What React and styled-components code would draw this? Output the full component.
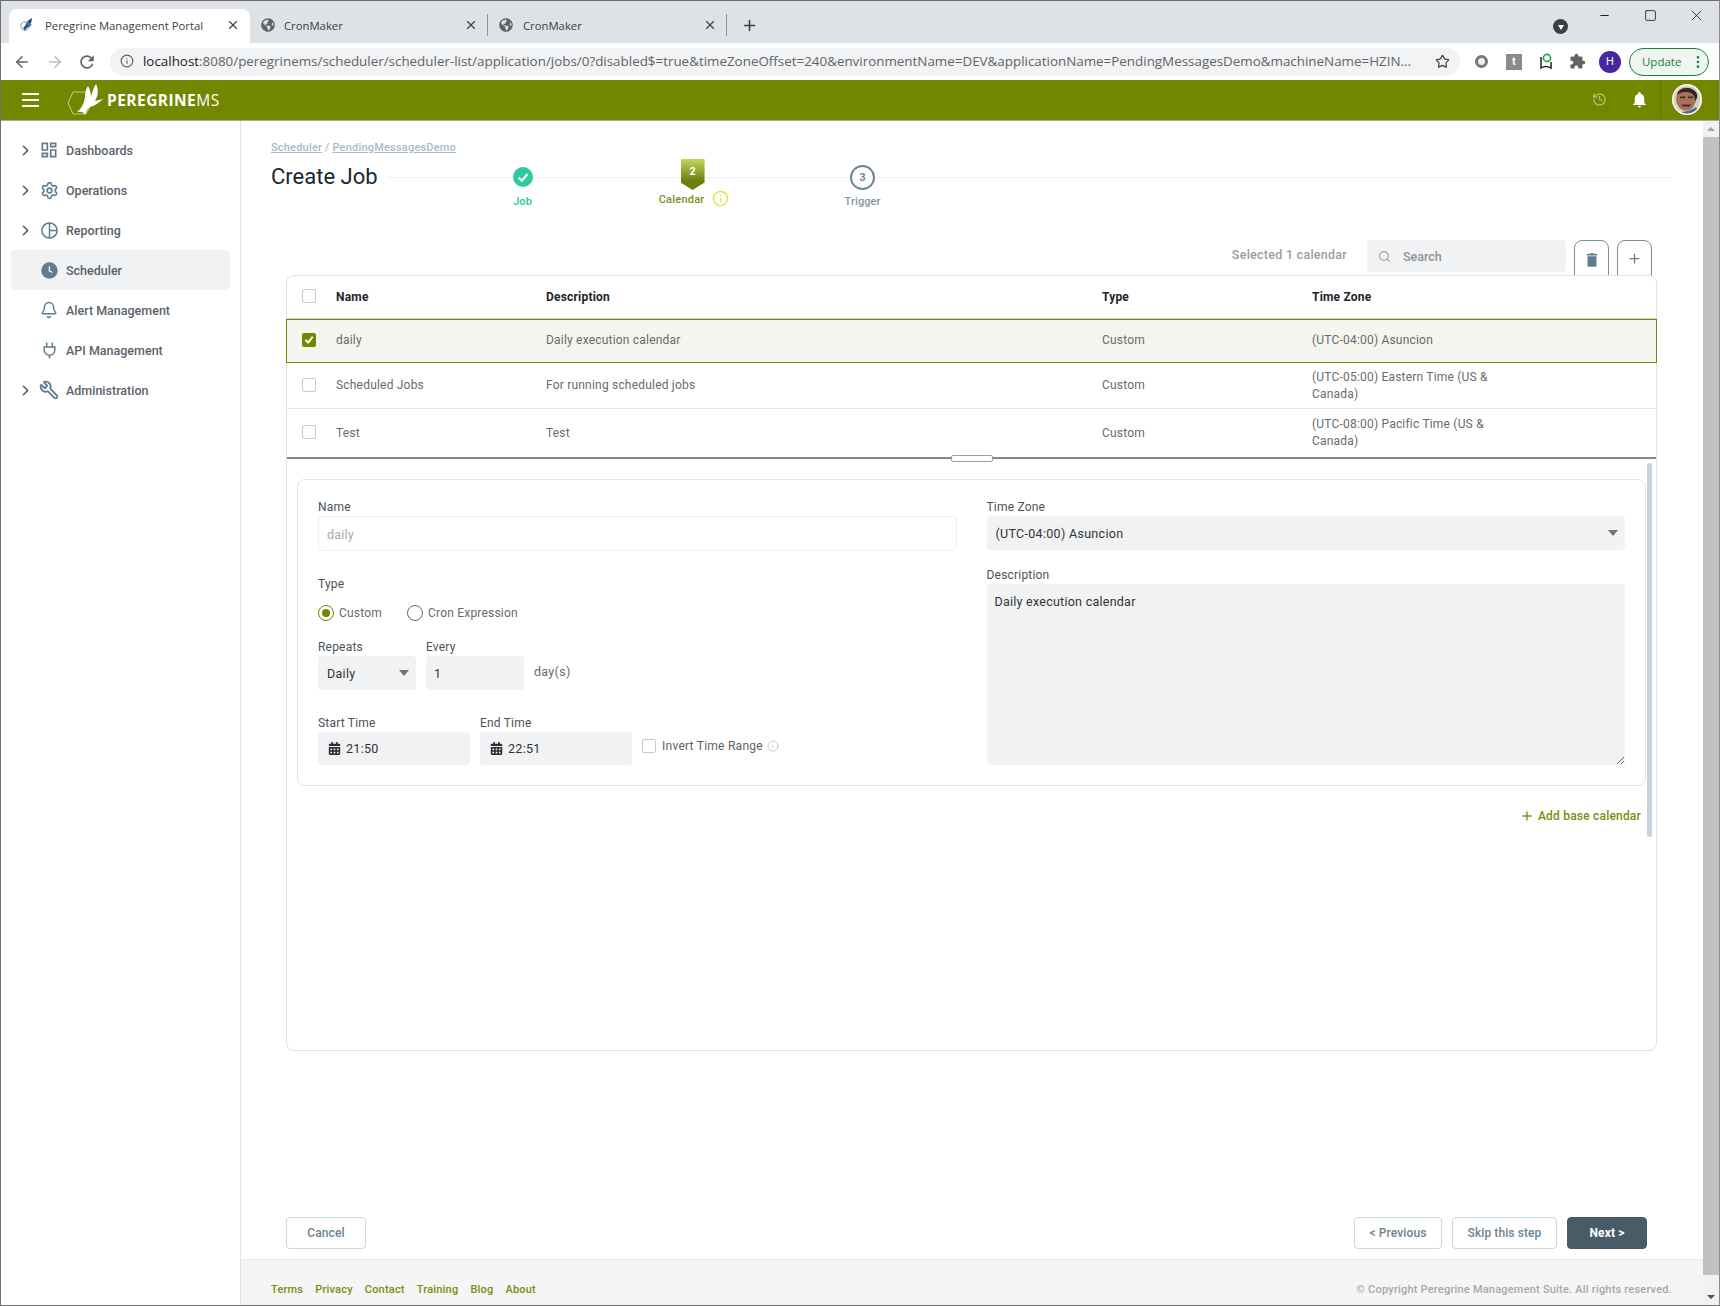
import React from "react";
import styled, { createGlobalStyle } from "styled-components";
import { ArrowLeft, ArrowRight, Info, Star, X, Plus, Minus, Square, ChevronRight, Settings, Bell, Wrench, History, Search, MoreVertical } from "lucide-react";
import { MdOutlineDashboard, MdExtension, MdNotifications, MdDelete, MdRefresh } from "react-icons/md";
import { FaCalendarAlt, FaGlobeAmericas } from "react-icons/fa";

const OLIVE = "#728600";

const GlobalStyle = createGlobalStyle`
  * { box-sizing: border-box; }
  html, body { margin: 0; height: 100%; overflow: hidden; background: #fff; }
  body { font-family: Roboto, "Liberation Sans", sans-serif; color: #212529; }
  #root { height: 100%; }
`;

const Window = styled.div`
  display: flex;
  flex-direction: column;
  width: 1720px;
  height: 1306px;
  border: 1px solid #6f6f6f;
  border-right-color: #8a8a8a;
`;

/* browser chrome */
const TabStrip = styled.div`
  display: flex;
  align-items: flex-end;
  height: 42px;
  padding-left: 8px;
  background: #dee1e6;
  flex-shrink: 0;
`;
const Tab = styled.div`
  display: flex;
  align-items: center;
  width: ${(p) => p.$width}px;
  height: 34px;
  padding: 0 10px 2px 9px;
  border-radius: 8px 8px 0 0;
  background: ${(p) => (p.$active ? "#fff" : "transparent")};
  font-family: "Open Sans", sans-serif;
  font-size: 11.3px;
  color: #3c4043;
  svg { flex-shrink: 0; }
  position: relative;
  &::after {
    content: "";
    display: ${(p) => (p.$active ? "none" : "block")};
    position: absolute;
    right: 0;
    top: 5px;
    width: 1px;
    height: 22px;
    background: #8f9297;
  }
`;
const TabIconSlot = styled.div`
  display: flex;
  justify-content: center;
  width: 18px;
  margin-right: ${(p) => p.$gap ?? 9}px;
  color: #5f6368;
`;
const TabTitle = styled.span`
  flex: 1;
  white-space: nowrap;
`;
const NewTab = styled.div`
  display: flex;
  align-items: center;
  height: 34px;
  padding-bottom: 2px;
  margin-left: 14px;
  color: #3c4043;
`;
const ProfileDot = styled.div`
  display: flex;
  align-items: center;
  justify-content: center;
  align-self: flex-start;
  width: 15px;
  height: 15px;
  margin: 18px 13px 0 auto;
  border-radius: 50%;
  background: #3c4043;
  &::after {
    content: "";
    border-left: 3.5px solid transparent;
    border-right: 3.5px solid transparent;
    border-top: 5px solid #fff;
    margin-top: 1px;
  }
`;
const WindowControls = styled.div`
  display: flex;
  align-self: flex-start;
  color: #222;
`;
const WindowButton = styled.div`
  display: flex;
  align-items: center;
  justify-content: center;
  width: 46px;
  height: 28px;
`;
const AddressBar = styled.div`
  display: flex;
  align-items: center;
  height: 37px;
  padding-left: 5px;
  background: #fff;
  flex-shrink: 0;
`;
const NavButton = styled.div`
  display: flex;
  align-items: center;
  justify-content: center;
  width: 32.6px;
  color: ${(p) => (p.$dim ? "#b9bcc0" : "#5f6368")};
`;
const Omnibox = styled.div`
  display: flex;
  align-items: center;
  width: 1350px;
  height: 28px;
  margin-left: 6.2px;
  padding: 0 10px 1px;
  border-radius: 14px;
  background: #f1f3f4;
  font-family: "Open Sans", sans-serif;
  font-size: 13.4px;
  color: #5f6368;
  white-space: nowrap;
`;
const UrlText = styled.div`
  flex: 1;
  margin-left: 9px;
  overflow: hidden;
  b { font-weight: 400; color: #202124; }
`;
const ExtSlot = styled.div`
  display: flex;
  align-items: center;
  justify-content: center;
  width: 32px;
  margin-left: ${(p) => (p.$first ? 6 : 0)}px;
  color: #5f6368;
`;
const ExtTile = styled.div`
  display: flex;
  align-items: center;
  justify-content: center;
  width: 16px;
  height: 16px;
  background: #8a8a8a;
  color: #fff;
  font-size: 11px;
  font-weight: 700;
`;
const ExtRing = styled.div`
  width: 13px;
  height: 13px;
  border-radius: 50%;
  border: 3px solid #777;
  background: #eee;
`;
const AccountDot = styled.div`
  display: flex;
  align-items: center;
  justify-content: center;
  width: 22px;
  height: 22px;
  border-radius: 50%;
  background: #4527a0;
  color: #fff;
  font-size: 11px;
`;
const UpdatePill = styled.div`
  display: flex;
  align-items: center;
  justify-content: space-between;
  width: 80px;
  height: 28px;
  margin-left: 3px;
  padding: 0 2px 0 12px;
  border: 1px solid #188038;
  border-radius: 14px;
  background: #eef6ef;
  color: #188038;
  font-family: "Open Sans", sans-serif;
  font-size: 11.5px;
`;

/* app header */
const AppHeader = styled.header`
  display: flex;
  align-items: center;
  height: 41px;
  padding: 0 0 1px 21px;
  background: ${OLIVE};
  border-bottom: 1px solid #a9a9a9;
  color: #fff;
  flex-shrink: 0;
`;
const Hamburger = styled.div`
  display: flex;
  flex-direction: column;
  gap: 4px;
  width: 17px;
  margin-right: 27px;
  span { display: block; height: 2px; background: #fff; }
`;
const Wordmark = styled.div`
  margin-left: 1px;
  font-family: "Open Sans", sans-serif;
  font-size: 15.5px;
  font-weight: 700;
  letter-spacing: 0.45px;
  span { font-weight: 400; }
`;
const HeaderTools = styled.div`
  display: flex;
  align-items: center;
  height: 100%;
  margin-left: auto;
`;
const HeaderIcon = styled.div`
  display: flex;
  justify-content: center;
  width: 40px;
  color: ${(p) => (p.$dim ? "#b4c270" : "#fff")};
`;
const AvatarCell = styled.div`
  display: flex;
  align-items: center;
  height: 100%;
  margin-left: 1px;
  padding: 0 17px 0 11px;
  border-left: 1px solid #62740a;
`;

/* body */
const Body = styled.div`
  display: flex;
  flex: 1;
  min-height: 0;
`;
const Sidebar = styled.nav`
  width: 240px;
  padding: 9px 10px 0;
  border-right: 1px solid #dfe1e3;
  flex-shrink: 0;
`;
const NavRow = styled.div`
  display: flex;
  align-items: center;
  height: 40px;
  border-radius: 4px;
  background: ${(p) => (p.$active ? "#f1f2f4" : "transparent")};
  font-size: 12.5px;
  font-weight: 500;
  color: #59636b;
`;
const Caret = styled.div`
  display: flex;
  justify-content: center;
  width: 28px;
  color: #555;
`;
const NavIcon = styled.div`
  display: flex;
  justify-content: center;
  width: 20px;
  margin-right: 7px;
  color: #5f7d8e;
`;
const Main = styled.main`
  display: flex;
  flex-direction: column;
  flex: 1;
  min-width: 0;
`;
const Breadcrumb = styled.div`
  padding: 20px 0 0 30px;
  font-size: 11px;
  font-weight: 500;
  line-height: 14px;
  letter-spacing: 0.2px;
  color: #a9bac5;
  a { color: inherit; text-decoration: underline; }
`;
const TitleRow = styled.div`
  display: flex;
  height: 51px;
  margin-top: 5px;
  padding: 0 31px 0 30px;
  flex-shrink: 0;
`;
const PageTitle = styled.h1`
  margin: 3px 10px 0 0;
  font-size: 22px;
  font-weight: 400;
  line-height: 28px;
  color: #212529;
  white-space: nowrap;
`;
const Steps = styled.div`
  position: relative;
  display: flex;
  flex: 1;
  gap: 70px;
  margin-top: -1px;
  padding-left: 85px;
  &::before {
    content: "";
    position: absolute;
    left: 0;
    right: 0;
    top: 18px;
    height: 1px;
    background: #f0f1f1;
  }
`;
const Step = styled.div`
  position: relative;
  display: flex;
  flex-direction: column;
  align-items: center;
  width: 100px;
`;
const StepSlot = styled.div`
  display: flex;
  align-items: center;
  justify-content: center;
  height: 36px;
`;
const StepBadge = styled.div`
  width: 24px;
  height: 31px;
  padding-top: 6px;
  background: linear-gradient(#c3d65f, #6c8012 70%);
  clip-path: polygon(0 0, 100% 0, 100% 76%, 50% 100%, 0 76%);
  color: #fff;
  font-size: 10.5px;
  font-weight: 700;
  line-height: 14px;
  text-align: center;
`;
const StepRing = styled.div`
  display: flex;
  align-items: center;
  justify-content: center;
  width: 25px;
  height: 25px;
  border: 2px solid #6b8494;
  border-radius: 50%;
  background: #fff;
  color: #6b8494;
  font-size: 10.5px;
  font-weight: 700;
`;
const StepLabel = styled.div`
  display: flex;
  align-items: center;
  gap: 8px;
  margin-top: ${(p) => p.$offset || 0}px;
  padding-left: ${(p) => p.$shift || 0}px;
  font-size: 11px;
  font-weight: 500;
  line-height: 14px;
  letter-spacing: ${(p) => (p.$shift ? 0.22 : 0.1)}px;
  color: ${(p) => p.$color};
  svg { margin-top: -2px; }
`;
const Content = styled.div`
  display: flex;
  flex-direction: column;
  flex: 1;
  min-height: 0;
  margin-top: 29px;
  padding: 0 46px 10px 45px;
`;
const Toolbar = styled.div`
  display: flex;
  justify-content: flex-end;
  gap: 8px;
  height: 35px;
  padding-right: 5px;
  flex-shrink: 0;
`;
const SelectedCount = styled.div`
  margin: 7px 12px 0 0;
  font-size: 12.5px;
  font-weight: 500;
  line-height: 16px;
  letter-spacing: 0.26px;
  color: #9a9ea2;
`;
const SearchBox = styled.div`
  display: flex;
  align-items: center;
  gap: 12px;
  width: 199px;
  height: 32px;
  padding-left: 11px;
  border-radius: 4px;
  background: #f1f2f4;
  font-size: 12.5px;
  font-weight: 500;
  color: #8d9499;
`;
const ToolButton = styled.div`
  display: flex;
  align-items: flex-start;
  justify-content: center;
  width: 35px;
  height: 42px;
  padding-top: 10px;
  border: 1px solid #838d93;
  border-radius: 8px 8px 0 0;
  background: #fff;
  color: #5f7d8e;
`;
const TableCard = styled.section`
  position: relative;
  z-index: 1;
  display: flex;
  flex-direction: column;
  height: 776px;
  border: 1px solid #e0e2e4;
  border-radius: 8px;
  background: #fff;
`;
const Row = styled.div`
  display: grid;
  grid-template-columns: 34px 210px 556px 210px 200px;
  align-items: center;
  height: ${(p) => p.$height}px;
  padding-left: 15px;
  padding-bottom: ${(p) => (p.$selected ? 2 : 0)}px;
  margin: 0 ${(p) => (p.$selected ? -1 : 0)}px;
  background: ${(p) => (p.$selected ? "#f4f5ef" : "transparent")};
  border: ${(p) => (p.$selected ? `1px solid ${OLIVE}` : "none")};
  border-bottom: ${(p) => (p.$selected ? `1px solid ${OLIVE}` : p.$head ? "1px solid #cfd2d4" : p.$last ? "none" : "1px solid #e3e5e6")};
  font-size: 12px;
  font-weight: ${(p) => (p.$head ? 700 : 400)};
  line-height: 17px;
  letter-spacing: 0.2px;
  color: ${(p) => (p.$head ? "#212529" : "#666b6f")};
`;
const Checkbox = styled.div`
  display: flex;
  align-items: center;
  justify-content: center;
  width: 14px;
  height: 14px;
  margin-bottom: ${(p) => (p.$raise ? 2 : 0)}px;
  border: 1px solid ${(p) => (p.$checked ? OLIVE : "#c6cacd")};
  border-radius: 2px;
  background: ${(p) => (p.$checked ? OLIVE : "#fff")};
  color: #fff;
  flex-shrink: 0;
`;
const Splitter = styled.div`
  position: relative;
  height: 2px;
  background: #85898c;
  flex-shrink: 0;
  &::after {
    content: "";
    position: absolute;
    left: 664px;
    top: -2px;
    width: 40px;
    height: 5px;
    border: 1px solid #9a9ea1;
    border-radius: 2px;
    background: #fff;
  }
`;
const Detail = styled.div`
  position: relative;
  flex: 1;
  padding: 20px 10px 0;
  &::after {
    content: "";
    position: absolute;
    right: 4px;
    top: 4px;
    width: 5px;
    height: 374px;
    border-radius: 3px;
    background: #c5d3dc;
  }
`;
const FormCard = styled.div`
  display: grid;
  grid-template-columns: 1fr 1fr;
  gap: 30px;
  height: 307px;
  padding: 20px 20px 19px;
  border: 1px solid #e3e5e7;
  border-radius: 8px;
`;
const Column = styled.div`
  display: flex;
  flex-direction: column;
  min-width: 0;
`;
const Label = styled.label`
  display: block;
  margin-top: ${(p) => p.$top || 0}px;
  margin-bottom: ${(p) => p.$bottom ?? 2}px;
  font-size: 12px;
  font-weight: 400;
  line-height: 14px;
  letter-spacing: 0.2px;
  color: #4c5257;
`;
const TextInput = styled.input`
  display: block;
  width: ${(p) => (p.$width ? `${p.$width}px` : "100%")};
  height: ${(p) => p.$height || 34}px;
  padding: ${(p) => (p.disabled ? "1px" : "0")} 8px 0;
  border: ${(p) => (p.disabled ? "1px solid #eceeef" : "none")};
  border-radius: 4px;
  background: ${(p) => (p.disabled ? "#fff" : "#f1f2f4")};
  font-family: inherit;
  font-size: 12.5px;
  letter-spacing: 0.2px;
  color: ${(p) => (p.disabled ? "#a8abad" : "#333")};
  outline: none;
`;
const RadioRow = styled.div`
  display: flex;
  gap: 25px;
  margin-top: 14px;
  height: 16px;
`;
const RadioLabel = styled.div`
  display: flex;
  align-items: center;
  gap: 5px;
  font-size: 12px;
  letter-spacing: 0.2px;
  color: #666b6f;
`;
const RadioDot = styled.div`
  display: flex;
  align-items: center;
  justify-content: center;
  width: 16px;
  height: 16px;
  border: 1px solid ${(p) => (p.$on ? OLIVE : "#666")};
  border-radius: 50%;
  &::after {
    content: "";
    display: ${(p) => (p.$on ? "block" : "none")};
    width: 8px;
    height: 8px;
    border-radius: 50%;
    background: ${OLIVE};
  }
`;
const FieldRow = styled.div`
  display: flex;
  align-items: flex-end;
  gap: 10px;
  margin-top: ${(p) => p.$top || 0}px;
`;
const Field = styled.div`
  width: ${(p) => p.$width}px;
  flex-shrink: 0;
`;
const SelectBox = styled.div`
  display: flex;
  align-items: center;
  justify-content: space-between;
  height: 34px;
  padding: 0 7px 0 ${(p) => p.$pad || 9}px;
  border-radius: 4px;
  background: #f1f2f4;
  font-size: 12.5px;
  letter-spacing: 0.3px;
  color: #333;
  &::after {
    content: "";
    border-left: 5.5px solid transparent;
    border-right: 5.5px solid transparent;
    border-top: 6px solid #6c7277;
  }
`;
const Unit = styled.div`
  align-self: flex-end;
  margin-bottom: 10px;
  font-size: 12.5px;
  line-height: 16px;
  letter-spacing: 0.3px;
  color: #666b6f;
`;
const TimeBox = styled.div`
  display: flex;
  align-items: center;
  gap: 5px;
  height: 33px;
  padding-left: 10px;
  border-radius: 4px;
  background: #f1f2f4;
  font-size: 12.5px;
  letter-spacing: 0.3px;
  color: #333;
`;
const InvertOption = styled.div`
  display: flex;
  align-items: center;
  gap: 6px;
  height: 33px;
  margin-bottom: 3px;
  font-size: 12px;
  letter-spacing: 0.25px;
  color: #5c6166;
  svg { margin-left: -2px; }
`;
const Description = styled.textarea`
  display: block;
  width: 100%;
  height: 181px;
  padding: 10px 8px;
  border: none;
  border-radius: 4px;
  background: #f1f2f4;
  font-family: inherit;
  font-size: 12.5px;
  letter-spacing: 0.25px;
  color: #333;
  outline: none;
`;
const AddRow = styled.div`
  display: flex;
  justify-content: flex-end;
  align-items: center;
  gap: 4px;
  margin-top: 22px;
  padding-right: 5px;
  font-size: 12px;
  font-weight: 500;
  line-height: 16px;
  letter-spacing: 0.2px;
  color: #7b8d10;
`;
const Actions = styled.div`
  display: flex;
  align-items: center;
  gap: 10px;
  margin-top: auto;
  padding-right: 10px;
`;
const Button = styled.div`
  display: flex;
  align-items: center;
  justify-content: center;
  width: ${(p) => p.$width}px;
  height: 32px;
  margin-left: ${(p) => (p.$push ? "auto" : 0)};
  border: 1px solid ${(p) => (p.$primary ? "#485c68" : "#ccd8df")};
  border-radius: 4px;
  background: ${(p) => (p.$primary ? "#485c68" : "#fff")};
  font-size: 12px;
  font-weight: ${(p) => (p.$primary ? 700 : 500)};
  letter-spacing: 0.1px;
  color: ${(p) => (p.$primary ? "#fff" : "#6a8393")};
`;
const Footer = styled.footer`
  display: flex;
  justify-content: space-between;
  height: 46px;
  padding: 23px 31px 0 30px;
  border-top: 1px solid #e9eaea;
  background: #f5f5f5;
  font-size: 11px;
  font-weight: 500;
  line-height: 14px;
  letter-spacing: 0.2px;
  flex-shrink: 0;
`;
const FooterLinks = styled.div`
  display: flex;
  gap: 12px;
  color: #7c8b12;
`;
const Copyright = styled.div`
  color: #a8a8a8;
  letter-spacing: 0.21px;
`;
const ScrollTrack = styled.div`
  display: flex;
  flex-direction: column;
  align-items: center;
  width: 16px;
  background: #f1f1f1;
  flex-shrink: 0;
`;
const ScrollArrow = styled.div`
  display: flex;
  align-items: center;
  justify-content: center;
  width: 100%;
  height: 16px;
  &::after {
    content: "";
    border-left: 4px solid transparent;
    border-right: 4px solid transparent;
    border-${(p) => (p.$down ? "top" : "bottom")}: 4px solid ${(p) => (p.$down ? "#505050" : "#a3a3a3")};
  }
`;
const ScrollThumb = styled.div`
  flex: 1;
  width: 100%;
  margin-bottom: 14px;
  background: #c1c1c1;
`;

const Tick = ({ size = 10, width = 2.4 }) => (
  <svg width={size} height={size} viewBox="0 0 12 12" fill="none" stroke="currentColor" strokeWidth={width} strokeLinecap="round" strokeLinejoin="round">
    <path d="M2.2 6.4 5 9.2 9.8 2.8" />
  </svg>
);

const PortalFavicon = () => (
  <svg width="14" height="16" viewBox="0 0 14 16">
    <path d="M3 11C5 9 6 8 6.5 5.5 7.5 4 9 2.5 12 1c0 3-.8 5-2 6.5l2 0C10 10 8 10.5 6.5 11L5 14.5C4.5 13 4 12 3 11Z" fill="#2a4f7c" />
    <circle cx="5" cy="9" r="4.2" fill="none" stroke="#7d9cb8" strokeWidth="1" />
  </svg>
);

const Logo = () => (
  <svg width="40" height="32" viewBox="0 0 40 32">
    <path d="M2 19 7 8H21L26 19 20 30H7Z" fill="none" stroke="#c3cf86" strokeWidth="1" />
    <path d="M11 28C15 25 18 20 19 13 19 8 20 5 22 2 24 5 25 9 25 13 26 8 28 3 30 0 33 6 32 12 29 17L37 15C33 19 28 22 24 23 21 25 20 28 19 31 18 28 15 27 11 28Z" fill="#fff" />
  </svg>
);

const Avatar = () => (
  <svg width="30" height="31" viewBox="0 0 30 31">
    <defs>
      <clipPath id="avatar-clip">
        <ellipse cx="15" cy="15.5" rx="13.5" ry="14" />
      </clipPath>
    </defs>
    <ellipse cx="15" cy="15.5" rx="15" ry="15.5" fill="#fff" />
    <g clipPath="url(#avatar-clip)">
      <rect width="30" height="31" fill="#d8d3bd" />
      <ellipse cx="14" cy="15" rx="10" ry="11.5" fill="#a8705a" />
      <path d="M5 11C6 3 21 1 25 10 26 14 24 16 23 17 23 11 20 8 14 8 9 8 6 10 5 11Z" fill="#2e2724" />
      <rect x="8" y="12.5" width="5" height="1.6" fill="#3a2a22" />
      <rect x="16" y="12.5" width="5" height="1.6" fill="#3a2a22" />
      <path d="M9.5 20.5H19L18 22.5H10.5Z" fill="#4b2f28" />
      <path d="M10 28C16 27 20 26 24 23L29 31H10Z" fill="#4a6a8e" />
    </g>
  </svg>
);

const PieIcon = () => (
  <svg width="17" height="17" viewBox="0 0 17 17" fill="none" stroke="currentColor" strokeWidth="1.5">
    <circle cx="8.5" cy="8.5" r="7.6" />
    <path d="M8.5 1v15M8.5 8.5H16" />
  </svg>
);

const ClockFilled = () => (
  <svg width="17" height="17" viewBox="0 0 17 17">
    <circle cx="8.5" cy="8.5" r="8.2" fill="currentColor" />
    <path d="M8.3 4.6V8.8L11 10.2" fill="none" stroke="#fff" strokeWidth="1.2" strokeLinecap="round" />
  </svg>
);

const PlugIcon = () => (
  <svg width="13" height="17" viewBox="0 0 13 17" fill="none" stroke="currentColor" strokeWidth="1.5">
    <path d="M3.7 0.5V5M9.3 0.5V5M1.2 5H11.8V8A5.3 5.3 0 0 1 1.2 8ZM6.5 13V16.5" />
  </svg>
);

const navItems = [
  { label: "Dashboards", icon: <MdOutlineDashboard size={20} />, caret: true },
  { label: "Operations", icon: <Settings size={19} />, caret: true },
  { label: "Reporting", icon: <PieIcon />, caret: true },
  { label: "Scheduler", icon: <ClockFilled />, active: true },
  { label: "Alert Management", icon: <Bell size={18} /> },
  { label: "API Management", icon: <PlugIcon /> },
  { label: "Administration", icon: <Wrench size={20} strokeWidth={2.2} style={{ transform: "scaleX(-1)" }} />, caret: true },
];

const calendars = [
  { name: "daily", description: "Daily execution calendar", zone: "(UTC-04:00) Asuncion", height: 44, selected: true },
  { name: "Scheduled Jobs", description: "For running scheduled jobs", zone: "(UTC-05:00) Eastern Time (US & Canada)", height: 46 },
  { name: "Test", description: "Test", zone: "(UTC-08:00) Pacific Time (US & Canada)", height: 48, last: true },
];

const url =
  "/peregrinems/scheduler/scheduler-list/application/jobs/0?disabled$=true&timeZoneOffset=240&environmentName=DEV&applicationName=PendingMessagesDemo&machineName=HZIN...";

export default function App() {
  return (
    <Window>
      <GlobalStyle />
      <TabStrip>
        <Tab $active $width={241}>
          <TabIconSlot><PortalFavicon /></TabIconSlot>
          <TabTitle>Peregrine Management Portal</TabTitle>
          <X size={14} color="#3c4043" />
        </Tab>
        <Tab $width={238}>
          <TabIconSlot $gap={7}><FaGlobeAmericas size={14} /></TabIconSlot>
          <TabTitle>CronMaker</TabTitle>
          <X size={14} color="#3c4043" />
        </Tab>
        <Tab $width={239}>
          <TabIconSlot $gap={8}><FaGlobeAmericas size={14} /></TabIconSlot>
          <TabTitle>CronMaker</TabTitle>
          <X size={14} color="#3c4043" />
        </Tab>
        <NewTab><Plus size={17} strokeWidth={2.2} /></NewTab>
        <ProfileDot />
        <WindowControls>
          <WindowButton><Minus size={13} /></WindowButton>
          <WindowButton><Square size={13} strokeWidth={1.6} /></WindowButton>
          <WindowButton><X size={17} strokeWidth={1.2} /></WindowButton>
        </WindowControls>
      </TabStrip>

      <AddressBar>
        <NavButton><ArrowLeft size={18} /></NavButton>
        <NavButton $dim><ArrowRight size={18} /></NavButton>
        <NavButton><MdRefresh size={20} /></NavButton>
        <Omnibox>
          <Info size={14} />
          <UrlText><b>localhost</b>:8080{url}</UrlText>
          <Star size={15} color="#444" />
        </Omnibox>
        <ExtSlot $first><ExtRing /></ExtSlot>
        <ExtSlot><ExtTile>t</ExtTile></ExtSlot>
        <ExtSlot>
          <svg width="16" height="18" viewBox="0 0 16 18" fill="none">
            <circle cx="9" cy="5" r="3.6" stroke="#2e9e48" strokeWidth="1.6" />
            <path d="M3 4v11c3-2 6-2 10 0V9" stroke="#222" strokeWidth="1.5" />
          </svg>
        </ExtSlot>
        <ExtSlot><MdExtension size={17} /></ExtSlot>
        <ExtSlot><AccountDot>H</AccountDot></ExtSlot>
        <UpdatePill>Update<MoreVertical size={16} /></UpdatePill>
      </AddressBar>

      <AppHeader>
        <Hamburger><span /><span /><span /></Hamburger>
        <Logo />
        <Wordmark>PEREGRINE<span>MS</span></Wordmark>
        <HeaderTools>
          <HeaderIcon $dim><History size={15} /></HeaderIcon>
          <HeaderIcon><MdNotifications size={19} /></HeaderIcon>
          <AvatarCell><Avatar /></AvatarCell>
        </HeaderTools>
      </AppHeader>

      <Body>
        <Sidebar>
          {navItems.map((item) => (
            <NavRow key={item.label} $active={item.active}>
              <Caret>{item.caret && <ChevronRight size={17} strokeWidth={2.2} />}</Caret>
              <NavIcon>{item.icon}</NavIcon>
              {item.label}
            </NavRow>
          ))}
        </Sidebar>

        <Main>
          <Breadcrumb><a>Scheduler</a> / <a>PendingMessagesDemo</a></Breadcrumb>
          <TitleRow>
            <PageTitle>Create Job</PageTitle>
            <Steps>
              <Step>
                <StepSlot>
                  <svg width="20" height="20" viewBox="0 0 20 20">
                    <circle cx="10" cy="10" r="10" fill="#2ec99e" />
                    <path d="M5.5 10.5 8.8 13.8 14.5 7" fill="none" stroke="#fff" strokeWidth="2" />
                  </svg>
                </StepSlot>
                <StepLabel $color="#2ec99e">Job</StepLabel>
              </Step>
              <Step>
                <StepBadge>2</StepBadge>
                <StepLabel $color="#7b8d1e" $offset={2} $shift={3}>
                  Calendar
                  <Info size={17} color="#e2e24a" strokeWidth={2} />
                </StepLabel>
              </Step>
              <Step>
                <StepSlot><StepRing>3</StepRing></StepSlot>
                <StepLabel $color="#8497a3">Trigger</StepLabel>
              </Step>
            </Steps>
          </TitleRow>

          <Content>
            <Toolbar>
              <SelectedCount>Selected 1 calendar</SelectedCount>
              <SearchBox><Search size={13} color="#9aa0a4" />Search</SearchBox>
              <ToolButton><MdDelete size={18} /></ToolButton>
              <ToolButton><Plus size={15} /></ToolButton>
            </Toolbar>

            <TableCard>
              <Row $head $height={43}>
                <Checkbox $raise />
                <div>Name</div>
                <div>Description</div>
                <div>Type</div>
                <div>Time Zone</div>
              </Row>
              {calendars.map((c) => (
                <Row key={c.name} $height={c.height} $selected={c.selected} $last={c.last}>
                  <Checkbox $raise={!c.selected} $checked={c.selected}>{c.selected && <Tick />}</Checkbox>
                  <div>{c.name}</div>
                  <div>{c.description}</div>
                  <div>Custom</div>
                  <div>{c.zone}</div>
                </Row>
              ))}
              <Splitter />
              <Detail>
                <FormCard>
                  <Column>
                    <Label>Name</Label>
                    <TextInput disabled value="daily" readOnly $height={35} />
                    <Label $top={26} $bottom={0}>Type</Label>
                    <RadioRow>
                      <RadioLabel><RadioDot $on />Custom</RadioLabel>
                      <RadioLabel><RadioDot />Cron Expression</RadioLabel>
                    </RadioRow>
                    <FieldRow $top={19}>
                      <Field $width={98}>
                        <Label>Repeats</Label>
                        <SelectBox>Daily</SelectBox>
                      </Field>
                      <Field $width={98}>
                        <Label>Every</Label>
                        <TextInput defaultValue="1" />
                      </Field>
                      <Unit>day(s)</Unit>
                    </FieldRow>
                    <FieldRow $top={26}>
                      <Field $width={152}>
                        <Label>Start Time</Label>
                        <TimeBox><FaCalendarAlt size={13} color="#2b2f33" />21:50</TimeBox>
                      </Field>
                      <Field $width={152}>
                        <Label>End Time</Label>
                        <TimeBox><FaCalendarAlt size={13} color="#2b2f33" />22:51</TimeBox>
                      </Field>
                      <InvertOption>
                        <Checkbox />
                        Invert Time Range
                        <Info size={12} color="#c4c8ca" />
                      </InvertOption>
                    </FieldRow>
                  </Column>
                  <Column>
                    <Label>Time Zone</Label>
                    <SelectBox>(UTC-04:00) Asuncion</SelectBox>
                    <Label $top={18}>Description</Label>
                    <Description defaultValue="Daily execution calendar" />
                  </Column>
                </FormCard>
                <AddRow><Plus size={14} strokeWidth={2.4} />Add base calendar</AddRow>
              </Detail>
            </TableCard>

            <Actions>
              <Button $width={80}>Cancel</Button>
              <Button $width={88} $push>&lt; Previous</Button>
              <Button $width={105}>Skip this step</Button>
              <Button $width={80} $primary>Next &gt;</Button>
            </Actions>
          </Content>

          <Footer>
            <FooterLinks>
              <span>Terms</span>
              <span>Privacy</span>
              <span>Contact</span>
              <span>Training</span>
              <span>Blog</span>
              <span>About</span>
            </FooterLinks>
            <Copyright>© Copyright Peregrine Management Suite. All rights reserved.</Copyright>
          </Footer>
        </Main>

        <ScrollTrack>
          <ScrollArrow />
          <ScrollThumb />
          <ScrollArrow $down />
        </ScrollTrack>
      </Body>
    </Window>
  );
}
